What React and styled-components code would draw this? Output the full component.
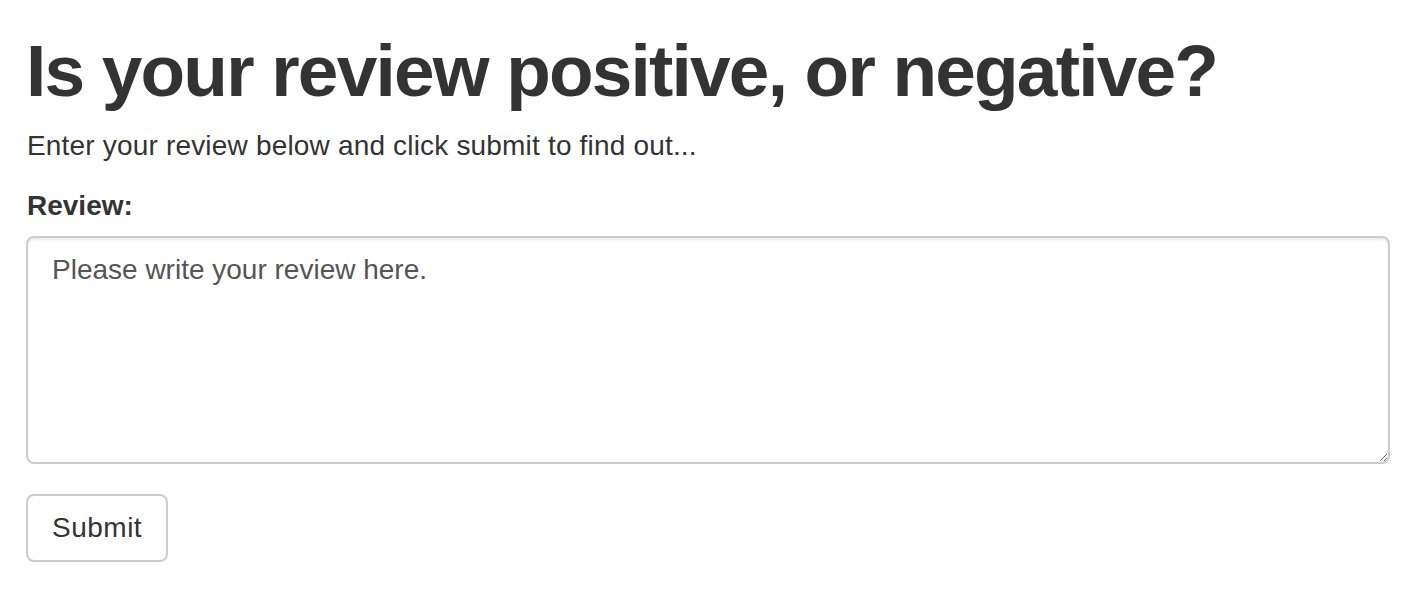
import styled, { createGlobalStyle } from 'styled-components';

const GlobalStyle = createGlobalStyle`
  * {
    box-sizing: border-box;
  }
  body {
    margin: 0;
    background: #fff;
    color: #333;
    font-family: 'Liberation Sans', Arial, Helvetica, sans-serif;
    font-size: 28px;
    line-height: 40px;
  }
`;

const Page = styled.div`
  padding: 31px 18px 0 26px;
`;

const Title = styled.h1`
  margin: 0 0 15px 0;
  font-size: 73px;
  line-height: 80px;
  font-weight: 700;
  letter-spacing: -1.8px;
  color: #333;
`;

const Lead = styled.p`
  margin: 0 0 20px 0;
  padding-left: 1px;
  letter-spacing: 0.18px;
`;

const FormGroup = styled.div`
  margin-bottom: 30px;
`;

const Label = styled.label`
  display: block;
  margin-bottom: 10px;
  padding-left: 1px;
  font-weight: 700;
`;

const TextArea = styled.textarea`
  display: block;
  width: 100%;
  height: 228px;
  padding: 12px 24px;
  border: 2px solid #ccc;
  border-radius: 8px;
  box-shadow: inset 0 2px 2px rgba(0, 0, 0, 0.075);
  font-family: inherit;
  font-size: 28px;
  line-height: 40px;
  color: #555;
  background: #fff;
  outline: none;

  &::placeholder {
    color: #555;
    opacity: 1;
  }
`;

const Button = styled.button`
  display: inline-block;
  padding: 12px 24px;
  border: 2px solid #ccc;
  border-radius: 8px;
  background: #fff;
  color: #333;
  font-family: inherit;
  font-size: 28px;
  line-height: 40px;
  letter-spacing: 0.5px;
  cursor: pointer;
`;

const App = () => {
  return (
    <>
      <GlobalStyle />
      <Page>
        <Title>Is your review positive, or negative?</Title>
        <Lead>Enter your review below and click submit to find out...</Lead>
        <form onSubmit={(e) => e.preventDefault()}>
          <FormGroup>
            <Label htmlFor="review">Review:</Label>
            <TextArea
              id="review"
              name="review"
              rows={5}
              placeholder="Please write your review here."
            />
          </FormGroup>
          <Button type="submit">Submit</Button>
        </form>
      </Page>
    </>
  );
};

export default App;
